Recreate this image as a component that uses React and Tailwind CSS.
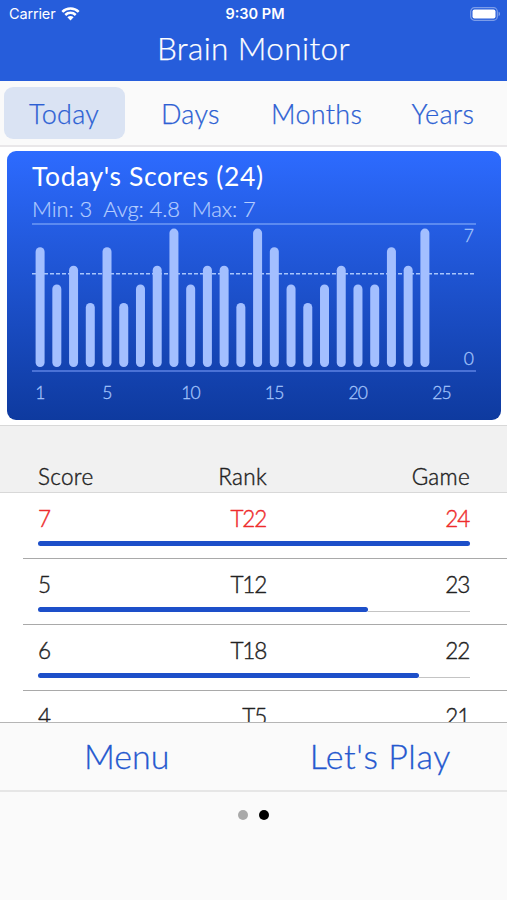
const TABS = ['Today', 'Days', 'Months', 'Years'];

const SCORES = [6, 4, 5, 3, 6, 3, 4, 5, 7, 4, 5, 5, 3, 7, 6, 4, 3, 4, 5, 4, 4, 6, 5, 7];

const ROWS = [
  { score: 7, rank: 'T22', game: 24, fill: 100, latest: true },
  { score: 5, rank: 'T12', game: 23, fill: 76.3 },
  { score: 6, rank: 'T18', game: 22, fill: 88.2 },
  { score: 4, rank: 'T5', game: 21, fill: 64.4 },
];

const STEP = 16.73;

function WifiIcon() {
  return (
    <svg width="19" height="14" viewBox="0 0 19 14" fill="none" stroke="white" strokeWidth="2.5">
      <path d="M1.3 4.8A11.6 11.6 0 0 1 17.7 4.8" />
      <path d="M4.3 8A7.4 7.4 0 0 1 14.7 8" />
      <path d="M9.5 13.4L6.4 10.3A4.4 4.4 0 0 1 12.6 10.3Z" fill="white" stroke="none" />
    </svg>
  );
}

function BatteryIcon() {
  return (
    <svg width="31" height="14" viewBox="0 0 31 14" fill="none">
      <rect x="0.7" y="0.7" width="26.6" height="12.6" rx="3.8" stroke="white" strokeOpacity="0.4" strokeWidth="1.2" />
      <rect x="2.5" y="2.5" width="23" height="9" rx="2" fill="white" />
      <path d="M28.6 4.8C30.4 5.4 30.4 8.6 28.6 9.2Z" fill="white" fillOpacity="0.45" />
    </svg>
  );
}

function ScoreChart() {
  return (
    <svg className="block font-['Lato',sans-serif] font-light tracking-[-0.8px]" width="445" height="182" viewBox="0 0 445 182">
      <line x1="0" x2="444" y1="1" y2="1" stroke="#5b8af0" strokeWidth="2" />
      <line x1="0" x2="444" y1="148" y2="148" stroke="#4a72d6" strokeWidth="2" />
      <line x1="0" x2="444" y1="50.7" y2="50.7" stroke="#a9c6fb" strokeWidth="1.5" strokeDasharray="4 2" />
      {SCORES.map((s, i) => {
        const h = 8.2 + s * 18.6;
        return <rect key={i} x={3.6 + i * STEP} y={144 - h} width="9" height={h} rx="4.5" fill="#a3bfff" />;
      })}
      <g fontSize="17.5" fill="#a3c4fb" stroke="#a3c4fb" strokeWidth="0.3">
        {[1, 5, 10, 15, 20, 25].map((n) => (
          <text key={n} x={8 + (n - 1) * STEP} y="176" textAnchor="middle">{n}</text>
        ))}
        <text x="441" y="19" textAnchor="end">7</text>
        <text x="441" y="142" textAnchor="end">0</text>
      </g>
    </svg>
  );
}

function ScoreRow({ row }) {
  return (
    <div className="h-[66px] shrink-0 pl-[23px]">
      <div className="h-full border-b border-[#a9a9a9] pl-[15px] pr-[37px]">
        <div className={`grid h-[48px] grid-cols-3 pt-[9px] text-[22.5px] font-light leading-[34px] tracking-[-1.2px] [-webkit-text-stroke:0.4px] ${row.latest ? 'text-[#ee2c2c]' : 'text-[#222]'}`}>
          <span>{row.score}</span>
          <span className="pr-[60px] text-right">{row.rank}</span>
          <span className="pr-px text-right">{row.game}</span>
        </div>
        <div className="flex h-[5px] items-end">
          <div className="h-[5px] rounded-full bg-[#1d4fc9]" style={{ width: `${row.fill}%` }} />
          <div className="h-px flex-1 bg-[#c4c4c4]" />
        </div>
      </div>
    </div>
  );
}

export default function App() {
  return (
    <div className="flex h-[900px] w-[507px] flex-col overflow-hidden bg-[#fafafa] font-['Lato',sans-serif]">
      <header className="h-[81px] shrink-0 bg-[#265ddb] text-white">
        <div className="grid h-[28px] grid-cols-3 items-center pl-[9px] pr-[6px] font-['Inter',sans-serif] text-[14.5px]">
          <div className="flex items-center gap-[6px] tracking-[-0.15px]">
            <span>Carrier</span>
            <WifiIcon />
          </div>
          <span className="text-center font-semibold">9:30 PM</span>
          <div className="flex justify-end"><BatteryIcon /></div>
        </div>
        <h1 className="text-center text-[31.5px] font-light leading-[40px] tracking-[0.4px] [-webkit-text-stroke:0.25px]">Brain Monitor</h1>
      </header>

      <nav className="grid h-[66px] shrink-0 grid-cols-4 border-b-2 border-[#e9e7e9] px-[1px] pt-[6px] text-[#2c60d3]">
        {TABS.map((tab, i) => (
          <button
            key={tab}
            className={`mx-[2.5px] h-[52px] rounded-[9px] pt-[2px] text-[27px] font-light tracking-[0.3px] [-webkit-text-stroke:0.25px] ${i === 0 ? 'bg-[#dae3f3]' : ''}`}
          >
            {tab}
          </button>
        ))}
      </nav>

      <section className="h-[278px] shrink-0 bg-white px-[7px] pt-[4px]">
        <div className="h-[269px] w-[494px] rounded-[9px] bg-gradient-to-b from-[#2d6bff] to-[#0e3a9f] pl-[25px] pt-[6px]">
          <h2 className="h-[38px] whitespace-nowrap text-[26.5px] leading-[38px] tracking-[0.6px] text-white">Today's Scores (24)</h2>
          <p className="h-[28px] whitespace-pre text-[22px] font-light leading-[27px] tracking-[-0.1px] text-[#b5cdff] [-webkit-text-stroke:0.2px]">Min: 3  Avg: 4.8  Max: 7</p>
          <ScoreChart />
        </div>
      </section>

      <div className="grid h-[68px] shrink-0 grid-cols-3 items-end border-b border-t border-[#d8d8d8] bg-[#f1f1f1] pl-[38px] pr-[37px] text-[22.5px] font-light leading-[30px] tracking-[0.3px] text-[#222] [-webkit-text-stroke:0.4px]">
        <span>Score</span>
        <span className="pr-[59px] text-right">Rank</span>
        <span className="text-right">Game</span>
      </div>

      <main className="flex h-[229px] shrink-0 flex-col overflow-hidden bg-white">
        {ROWS.map((row) => <ScoreRow key={row.game} row={row} />)}
      </main>

      <footer className="grid h-[70px] shrink-0 grid-cols-2 border-b-2 border-t border-b-[#e6e6e6] border-t-[#b5b5b5] text-[34px] font-light text-[#2458cf] [-webkit-text-stroke:0.3px]">
        <button className="pb-[2px]">Menu</button>
        <button className="pb-[2px] tracking-[0.6px]">Let's Play</button>
      </footer>

      <div className="flex justify-center gap-[11px] pt-[18px]">
        <span className="size-[10px] rounded-full bg-[#a9a9a9]" />
        <span className="size-[10px] rounded-full bg-black" />
      </div>
    </div>
  );
}
